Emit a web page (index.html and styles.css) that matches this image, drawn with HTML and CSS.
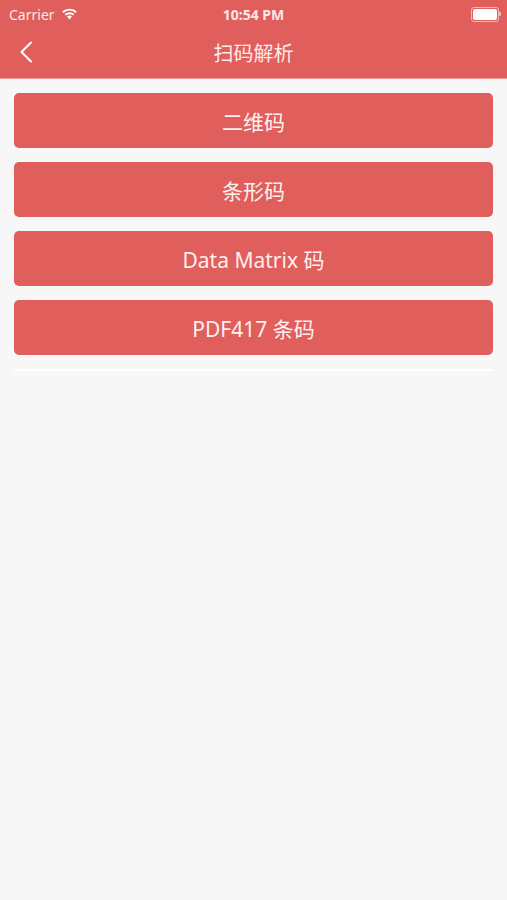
FILE: index.html
```html
<!DOCTYPE html>
<html lang="zh-CN">
<head>
    <meta charset="UTF-8">
    <meta name="viewport" content="width=device-width, initial-scale=1.0">
    <title>扫码解析</title>
    <link rel="stylesheet" href="styles.css">
</head>
<body>
    <div class="header">
        <div class="status-bar">
            <div class="carrier">
                Carrier
                <svg class="wifi" width="17" height="12" viewBox="0 0 17 12">
                    <path d="M8.5 11.5 L6 8.6 A3.8 3.8 0 0 1 11 8.6 Z" fill="#fff"/>
                    <path d="M3.6 6.2 A7 7 0 0 1 13.4 6.2 L12 7.6 A5 5 0 0 0 5 7.6 Z" fill="#fff"/>
                    <path d="M1.2 3.6 A10.5 10.5 0 0 1 15.8 3.6 L14.4 5 A8.5 8.5 0 0 0 2.6 5 Z" fill="#fff"/>
                </svg>
            </div>
            <div class="time">10:54 PM</div>
            <div class="battery">
                <span class="battery-body"><span class="battery-level"></span></span>
                <span class="battery-cap"></span>
            </div>
        </div>
        <div class="nav-bar">
            <svg class="back" width="14" height="22" viewBox="0 0 14 22">
                <path d="M12 1.5 L2.5 11 L12 20.5" fill="none" stroke="#fff" stroke-width="2" stroke-linecap="round" stroke-linejoin="round"/>
            </svg>
            <div class="nav-title">扫码解析</div>
        </div>
    </div>

    <div class="content">
        <div class="scan-btn">二维码</div>
        <div class="scan-btn">条形码</div>
        <div class="scan-btn">Data Matrix 码</div>
        <div class="scan-btn">PDF417 条码</div>
        <div class="divider"></div>
    </div>
</body>
</html>
```

FILE: styles.css
```css
body {
    font-family: "Noto Sans", "Noto Sans CJK SC", sans-serif;
    background-color: #f7f7f7;
    margin: 0;
    padding: 0;
    color: #fff;
}
.header {
    background-color: #e05e5b;
    border-bottom: 1px solid #ec9a97;
}
.status-bar {
    height: 28px;
    display: flex;
    align-items: center;
    justify-content: space-between;
    padding: 0 6px 0 9px;
    position: relative;
}
.carrier {
    font-size: 14px;
    display: flex;
    align-items: center;
    gap: 6px;
    color: #fbe9e8;
}
.time {
    position: absolute;
    left: 0;
    right: 0;
    text-align: center;
    font-size: 14px;
    font-weight: bold;
    color: #fbe9e8;
}
.battery {
    display: flex;
    align-items: center;
}
.battery-body {
    width: 24px;
    height: 11px;
    border: 1px solid #f3b8b6;
    border-radius: 3px;
    padding: 1px;
    display: flex;
}
.battery-level {
    flex: 1;
    background: #fff;
    border-radius: 2px;
}
.battery-cap {
    width: 2px;
    height: 4px;
    background: #f3b8b6;
    border-radius: 0 1px 1px 0;
}
.nav-bar {
    height: 50px;
    display: flex;
    align-items: center;
    justify-content: center;
    position: relative;
}
.back {
    position: absolute;
    left: 19px;
    top: 13px;
}
.nav-title {
    font-size: 20px;
    color: #fbecea;
    margin-top: -2px;
}
.content {
    padding: 14px 14px 0;
    display: flex;
    flex-direction: column;
    gap: 14px;
}
.scan-btn {
    height: 55px;
    background-color: #e05e5b;
    border-radius: 5px;
    display: flex;
    align-items: center;
    justify-content: center;
    font-size: 21px;
    color: #fdf0ef;
}
.divider {
    height: 2px;
    background: #fff;
    margin-top: 0;
}
```
